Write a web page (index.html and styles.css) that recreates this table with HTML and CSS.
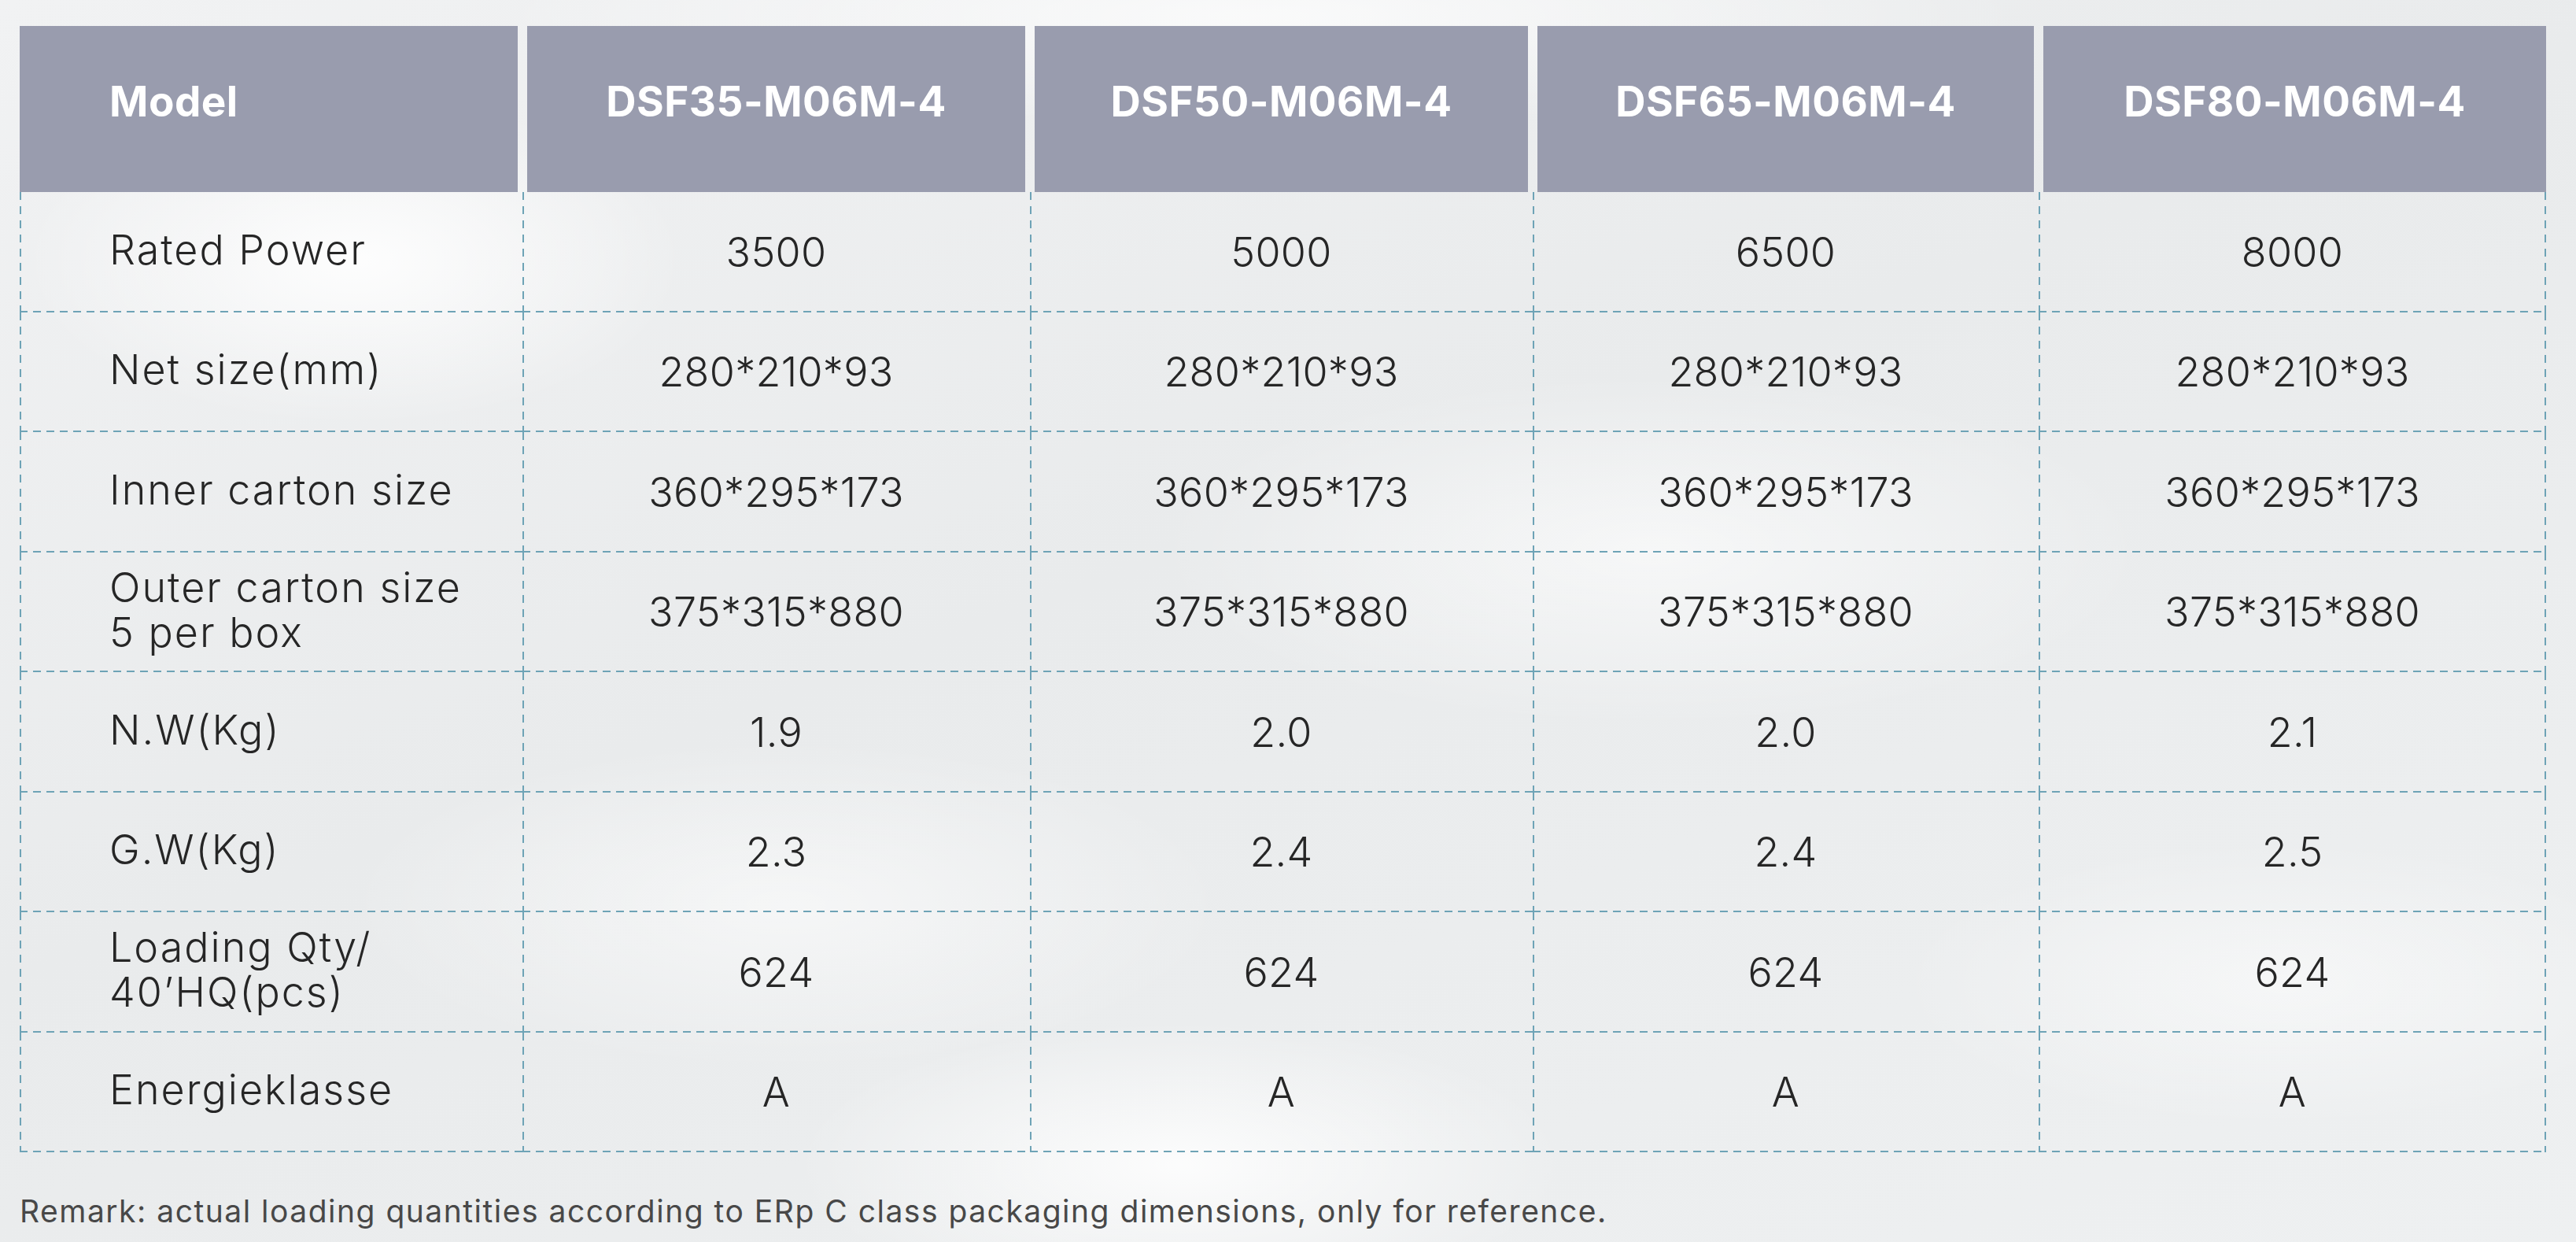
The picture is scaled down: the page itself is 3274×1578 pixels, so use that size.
FILE: index.html
```html
<!DOCTYPE html>
<html lang="en">
<head>
<meta charset="utf-8">
<title>DSF M06M-4 specifications</title>
<link rel="stylesheet" href="styles.css">
</head>
<body>
<main class="page">
  <div class="spec-table">
    <div class="head head-first">Model</div>
    <div class="head">DSF35-M06M-4</div>
    <div class="head">DSF50-M06M-4</div>
    <div class="head">DSF65-M06M-4</div>
    <div class="head head-last">DSF80-M06M-4</div>

    <div class="cell label">Rated Power</div>
    <div class="cell">3500</div>
    <div class="cell">5000</div>
    <div class="cell">6500</div>
    <div class="cell last">8000</div>

    <div class="cell label">Net size(mm)</div>
    <div class="cell">280*210*93</div>
    <div class="cell">280*210*93</div>
    <div class="cell">280*210*93</div>
    <div class="cell last">280*210*93</div>

    <div class="cell label">Inner carton size</div>
    <div class="cell">360*295*173</div>
    <div class="cell">360*295*173</div>
    <div class="cell">360*295*173</div>
    <div class="cell last">360*295*173</div>

    <div class="cell label">Outer carton size<br>5 per box</div>
    <div class="cell">375*315*880</div>
    <div class="cell">375*315*880</div>
    <div class="cell">375*315*880</div>
    <div class="cell last">375*315*880</div>

    <div class="cell label">N.W(Kg)</div>
    <div class="cell">1.9</div>
    <div class="cell">2.0</div>
    <div class="cell">2.0</div>
    <div class="cell last">2.1</div>

    <div class="cell label">G.W(Kg)</div>
    <div class="cell">2.3</div>
    <div class="cell">2.4</div>
    <div class="cell">2.4</div>
    <div class="cell last">2.5</div>

    <div class="cell label">Loading Qty/<br>40’HQ(pcs)</div>
    <div class="cell">624</div>
    <div class="cell">624</div>
    <div class="cell">624</div>
    <div class="cell last">624</div>

    <div class="cell label">Energieklasse</div>
    <div class="cell">A</div>
    <div class="cell">A</div>
    <div class="cell">A</div>
    <div class="cell last">A</div>
  </div>
  <p class="remark">Remark: actual loading quantities according to ERp C class packaging dimensions, only for reference.</p>
</main>
</body>
</html>
```

FILE: styles.css
```css
:root {
  --dash: #6ea3b6;
  --ink: #262626;
}

html, body {
  margin: 0;
  padding: 0;
}

body {
  width: 3274px;
  height: 1578px;
  overflow: hidden;
  font-family: "Inter", "Noto Sans", "Liberation Sans", sans-serif;
  color: var(--ink);
  background-color: #eceeef;
  background-image:
    radial-gradient(ellipse 700px 260px at 1500px 1480px, rgba(255,255,255,0.85), rgba(255,255,255,0) 70%),
    radial-gradient(ellipse 600px 300px at 450px 330px, rgba(255,255,255,0.9), rgba(255,255,255,0) 70%),
    radial-gradient(ellipse 900px 320px at 2100px 700px, rgba(255,255,255,0.6), rgba(255,255,255,0) 70%),
    radial-gradient(ellipse 800px 300px at 1000px 1150px, rgba(255,255,255,0.55), rgba(255,255,255,0) 70%),
    radial-gradient(ellipse 700px 260px at 2900px 1250px, rgba(255,255,255,0.5), rgba(255,255,255,0) 70%),
    radial-gradient(ellipse 1400px 200px at 1600px 20px, rgba(255,255,255,0.7), rgba(255,255,255,0) 70%),
    linear-gradient(160deg, #f1f2f3 0%, #e9ebec 45%, #eef0f1 100%);
}

.page {
  padding: 33px 38px 0 25px;
}

.spec-table {
  display: grid;
  grid-template-columns: 639fr 645fr 639fr 643fr 645fr;
  grid-template-rows: 211px repeat(8, 152.5px);
}

.head {
  display: flex;
  align-items: center;
  justify-content: center;
  margin: 0 6px;
  padding-bottom: 20px;
  background: #999cae;
  color: #ffffff;
  font-weight: 700;
  font-size: 53px;
  letter-spacing: 0.5px;
}

.head-first {
  margin-left: 0;
  justify-content: flex-start;
  padding-left: 114px;
}

.head-last {
  margin-right: 0;
}

.cell {
  display: flex;
  align-items: center;
  justify-content: center;
  font-size: 52px;
  font-weight: 300;
  line-height: 1.1;
  letter-spacing: 0.3px;
  background-image:
    repeating-linear-gradient(to right, var(--dash) 0 10px, transparent 10px 17px),
    repeating-linear-gradient(to bottom, var(--dash) 0 10px, transparent 10px 18px);
  background-size: 100% 2px, 2px 100%;
  background-position: left bottom, left top;
  background-repeat: no-repeat;
}

.cell.last {
  background-image:
    repeating-linear-gradient(to right, var(--dash) 0 10px, transparent 10px 17px),
    repeating-linear-gradient(to bottom, var(--dash) 0 10px, transparent 10px 18px),
    repeating-linear-gradient(to bottom, var(--dash) 0 10px, transparent 10px 18px);
  background-size: 100% 2px, 2px 100%, 2px 100%;
  background-position: left bottom, left top, right top;
}

.cell.label {
  justify-content: flex-start;
  padding-left: 114px;
  padding-bottom: 6px;
  letter-spacing: 2px;
}

.remark {
  margin: 52px 0 0 0;
  font-size: 39px;
  font-weight: 400;
  letter-spacing: 1.5px;
  color: #484848;
  line-height: 1.2;
}
```
